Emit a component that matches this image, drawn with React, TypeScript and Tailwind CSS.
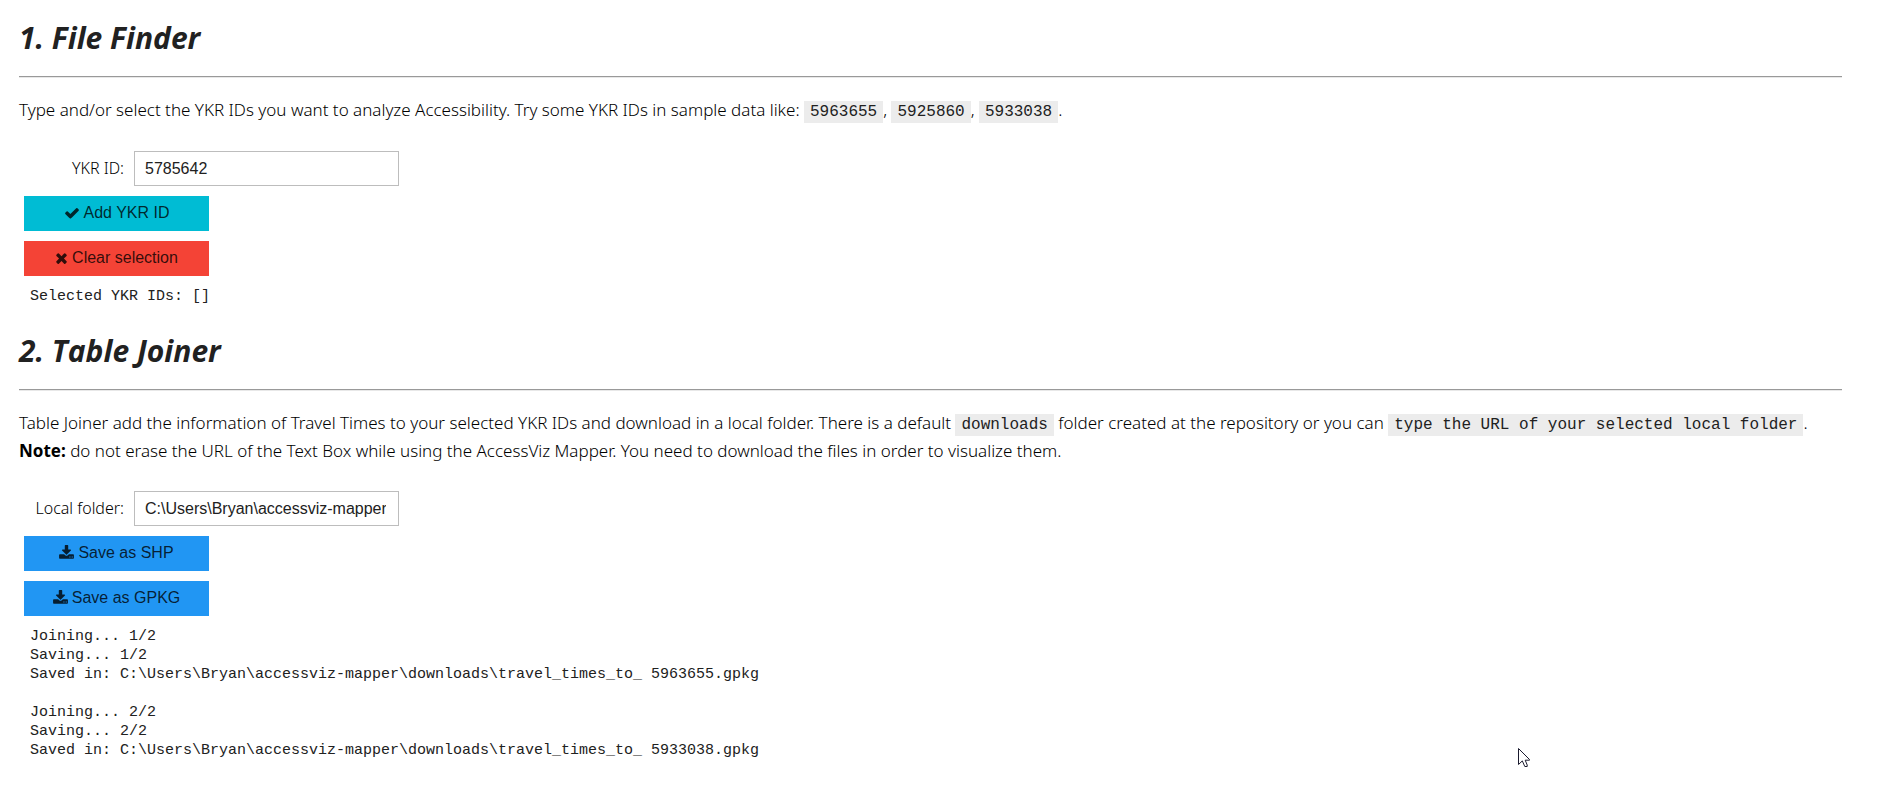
import type { ReactNode } from "react";

const sampleIds = ["5963655", "5925860", "5933038"];

const joinerLog = `Joining... 1/2
Saving... 1/2
Saved in: C:\\Users\\Bryan\\accessviz-mapper\\downloads\\travel_times_to_ 5963655.gpkg

Joining... 2/2
Saving... 2/2
Saved in: C:\\Users\\Bryan\\accessviz-mapper\\downloads\\travel_times_to_ 5933038.gpkg`;

function CheckIcon() {
  return (
    <svg viewBox="0 0 1792 1792" className="size-4 fill-current" aria-hidden="true">
      <path d="M1671 566q0 40-28 68l-724 724-136 136q-28 28-68 28t-68-28l-136-136-362-362q-28-28-28-68t28-68l136-136q28-28 68-28t68 28l294 295 656-657q28-28 68-28t68 28l136 136q28 28 28 68z" />
    </svg>
  );
}

function TimesIcon() {
  return (
    <svg viewBox="192 0 1408 1792" className="h-4 w-[13px] fill-current" aria-hidden="true">
      <path d="M1490 1322q0 40-28 68l-136 136q-28 28-68 28t-68-28l-294-294-294 294q-28 28-68 28t-68-28l-136-136q-28-28-28-68t28-68l294-294-294-294q-28-28-28-68t28-68l136-136q28-28 68-28t68 28l294 294 294-294q28-28 68-28t68 28l136 136q28 28 28 68t-28 68l-294 294 294 294q28 28 28 68z" />
    </svg>
  );
}

function DownloadIcon() {
  return (
    <svg viewBox="64 0 1664 1792" className="h-4 w-[15px] fill-current" aria-hidden="true">
      <path d="M1344 1344q0-26-19-45t-45-19-45 19-19 45 19 45 45 19 45-19 19-45zm256 0q0-26-19-45t-45-19-45 19-19 45 19 45 45 19 45-19 19-45zm128-224v320q0 40-28 68t-68 28h-1472q-40 0-68-28t-28-68v-320q0-40 28-68t68-28h465l135 136q58 56 136 56t136-56l136-136h464q40 0 68 28t28 68zm-325-569q17 41-14 70l-448 448q-18 19-45 19t-45-19l-448-448q-31-29-14-70 17-39 59-39h256v-448q0-26 19-45t45-19h256q26 0 45 19t19 45v448h256q42 0 59 39z" />
    </svg>
  );
}

function Code({ children }: { children: ReactNode }) {
  return (
    <code className="bg-[#ececec] px-1.5 py-0.5 font-['Liberation_Mono',monospace] text-base leading-5 font-normal text-[#212121]">
      {children}
    </code>
  );
}

function Heading({ children }: { children: ReactNode }) {
  return (
    <>
      <h2 className="font-['Open_Sans',sans-serif] text-[30px] leading-9 font-bold italic">
        {children}
      </h2>
      <hr className="mt-5 h-0.5 border-0 border-t border-b border-t-[#999999] border-b-[#e8e8e8]" />
    </>
  );
}

function TextField({ id, label, value }: { id: string; label: string; value: string }) {
  return (
    <div className="ml-[5px] flex items-center gap-2.5">
      <label
        htmlFor={id}
        className="w-[100px] text-right text-base leading-[33px] font-light text-black"
      >
        {label}
      </label>
      <input
        id={id}
        type="text"
        defaultValue={value}
        className="h-[35px] w-[265px] border border-[#bdbdbd] pr-3 pl-2.5 font-['Liberation_Sans',sans-serif] text-base outline-none"
      />
    </div>
  );
}

function Button({ className, children }: { className: string; children: ReactNode }) {
  return (
    <button
      type="button"
      className={`${className} mt-2.5 ml-[5px] flex h-[35px] w-[185px] items-center justify-center gap-1 pb-0.5 font-['Liberation_Sans',sans-serif] text-base text-black/80`}
    >
      {children}
    </button>
  );
}

function Output({ children }: { children: ReactNode }) {
  return (
    <pre className="mt-[11px] ml-[11px] font-['Liberation_Mono',monospace] text-[15px] leading-[19px]">
      {children}
    </pre>
  );
}

export default function App() {
  return (
    <main className="relative bg-white pt-5 pr-9 pb-5 pl-[19px] font-['Noto_Sans',sans-serif] text-[17px] leading-7 text-[#212121]">
      <section>
        <Heading>1. File Finder</Heading>
        <p className="mt-[18px] font-light text-black">
          Type and/or select the YKR IDs you want to analyze Accessibility. Try some YKR IDs in
          sample data like:{" "}
          {sampleIds.map((id, i) => (
            <span key={id}>
              <Code>{id}</Code>
              {i < sampleIds.length - 1 ? ", " : "."}
            </span>
          ))}
        </p>
        <div className="mt-[27px]">
          <TextField id="ykr-id" label="YKR ID:" value="5785642" />
          <Button className="bg-[#00bcd4]">
            <CheckIcon />
            Add YKR ID
          </Button>
          <Button className="bg-[#f44336]">
            <TimesIcon />
            Clear selection
          </Button>
          <Output>Selected YKR IDs: []</Output>
        </div>
      </section>

      <section className="mt-[27px]">
        <Heading>2. Table Joiner</Heading>
        <p className="mt-[18px] font-light text-black">
          Table Joiner add the information of Travel Times to your selected YKR IDs and download in
          a local folder. There is a default <Code>downloads</Code> folder created at the repository
          or you can <Code>type the URL of your selected local folder</Code>.
          <br />
          <strong className="font-bold">Note:</strong> do not erase the URL of the Text Box while
          using the AccessViz Mapper. You need to download the files in order to visualize them.
        </p>
        <div className="mt-[26px]">
          <TextField
            id="local-folder"
            label="Local folder:"
            value="C:\Users\Bryan\accessviz-mapper\downloads"
          />
          <Button className="bg-[#2196f3]">
            <DownloadIcon />
            Save as SHP
          </Button>
          <Button className="bg-[#2196f3]">
            <DownloadIcon />
            Save as GPKG
          </Button>
          <Output>{joinerLog}</Output>
        </div>
      </section>

      {/* mouse pointer */}
      <svg
        viewBox="0 0 12 19"
        className="pointer-events-none absolute top-[748px] right-[348px] h-[19px] w-3"
        aria-hidden="true"
      >
        <path
          d="M.5 .5V16.5L4.3 12.9L6.8 18.5H9.2V17L7.2 12.2H11.5V11.5Z"
          fill="#ffffff"
          stroke="#1a1a2e"
        />
      </svg>
    </main>
  );
}
